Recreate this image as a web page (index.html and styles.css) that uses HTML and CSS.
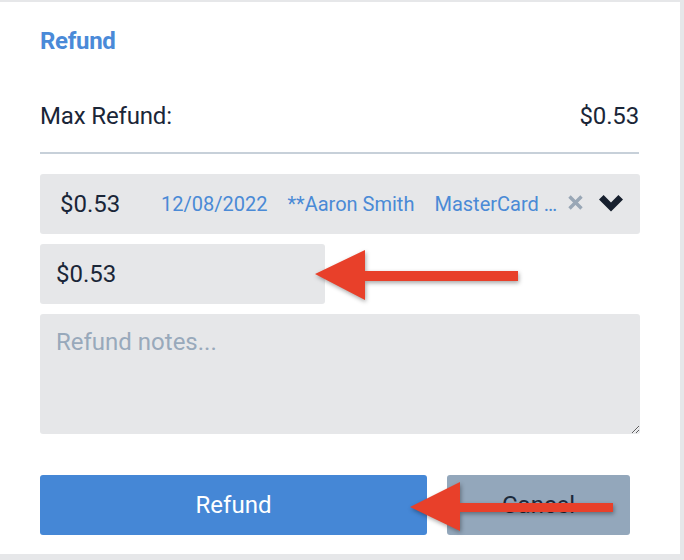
FILE: index.html
```html
<!DOCTYPE html>
<html>
<head>
<meta charset="utf-8">
<link rel="stylesheet" href="styles.css">
</head>
<body>
<div class="card">
  <h2 class="title">Refund</h2>
  <div class="max-row">
    <span>Max Refund:</span>
    <span>$0.53</span>
  </div>
  <hr class="divider">
  <div class="select">
    <span class="sel-amount">$0.53</span>
    <span class="sel-info">12/08/2022</span>
    <span class="sel-info">**Aaron Smith</span>
    <span class="sel-info card-name">MasterCard …</span>
    <svg class="clear" width="15" height="15" viewBox="0 0 15 15"><path d="M1.5 1.5 L13.5 13.5 M13.5 1.5 L1.5 13.5" stroke="#99a7b6" stroke-width="3.4" stroke-linecap="butt"/></svg>
    <svg class="chev" width="24" height="17" viewBox="0 0 24 17"><polygon points="0,4.6 4.6,0 12,7.4 19.4,0 24,4.6 12,16.6" fill="#17202e"/></svg>
  </div>
  <div class="amount">$0.53</div>
  <textarea class="notes" placeholder="Refund notes..."></textarea>
  <div class="actions">
    <button class="btn btn-primary">Refund</button>
    <button class="btn btn-cancel">Cancel</button>
  </div>

  <svg class="arrow arrow-1" width="220" height="60" viewBox="0 0 220 60">
    <polygon points="2,25 52,1 52,22 205,22 205,32 52,32 52,51" fill="#e8402a"/>
  </svg>
  <svg class="arrow arrow-2" width="220" height="60" viewBox="0 0 220 60">
    <polygon points="2,25 52,0 52,21 205,21 205,30 52,30 52,49" fill="#e8402a"/>
  </svg>
</div>
</body>
</html>
```
FILE: styles.css
```css
html, body {
  margin: 0;
  padding: 0;
  background: #e6e7e9;
}
body {
  font-family: Roboto, "Liberation Sans", sans-serif;
  color: #1a2638;
}
.card {
  position: relative;
  margin-top: 2px;
  width: 680px;
  height: 552px;
  box-sizing: border-box;
  background: #ffffff;
  padding: 25px 40px 0 40px;
}
.title {
  margin: 0;
  font-size: 24px;
  line-height: 28px;
  font-weight: 700;
  color: #4a8ad8;
  letter-spacing: -0.3px;
}
.max-row {
  margin-top: 47px;
  display: flex;
  justify-content: space-between;
  font-size: 24px;
  line-height: 28px;
  width: 599px;
  letter-spacing: -0.15px;
}
.divider {
  margin: 22px 0 0 0;
  border: 0;
  height: 2px;
  width: 599px;
  background: #c7d0d9;
}
.select {
  margin-top: 20px;
  height: 60px;
  width: 600px;
  box-sizing: border-box;
  background: #e6e7e9;
  border-radius: 3px;
  display: flex;
  align-items: center;
  padding: 0 17px 0 20px;
}
.sel-amount {
  font-size: 24px;
  width: 101px;
}
.sel-info {
  font-size: 20px;
  color: #4a8ad6;
  margin-right: 20px;
}
.card-name {
  margin-right: 11px;
}
.clear {
  margin-top: -4px;
}
.chev {
  margin-left: auto;
  margin-top: -2px;
}
.amount {
  margin-top: 10px;
  width: 285px;
  height: 60px;
  box-sizing: border-box;
  background: #e6e7e9;
  border-radius: 3px;
  padding-left: 16px;
  font-size: 24px;
  line-height: 60px;
}
.notes {
  display: block;
  margin: 10px 0 0 0;
  width: 600px;
  height: 120px;
  box-sizing: border-box;
  border: 0;
  outline: none;
  background: #e6e7e9;
  border-radius: 3px;
  padding: 14px 16px;
  font-family: Roboto, "Liberation Sans", sans-serif;
  font-size: 24px;
  line-height: 28px;
  color: #1a2638;
}
.notes::placeholder {
  color: #98a9bb;
}
.actions {
  margin-top: 41px;
  display: flex;
  gap: 20px;
}
.btn {
  height: 60px;
  border: 0;
  border-radius: 3px;
  font-family: Roboto, "Liberation Sans", sans-serif;
  font-size: 24px;
  padding: 0;
}
.btn-primary {
  width: 387px;
  background: #4587d6;
  color: #ffffff;
}
.btn-cancel {
  width: 183px;
  background: #93a7bb;
  color: #1b2a3b;
}
.arrow {
  position: absolute;
  filter: drop-shadow(1px 2px 2px rgba(0, 0, 0, 0.35));
}
.arrow-1 {
  left: 313px;
  top: 247px;
}
.arrow-2 {
  left: 408px;
  top: 480px;
}
```
